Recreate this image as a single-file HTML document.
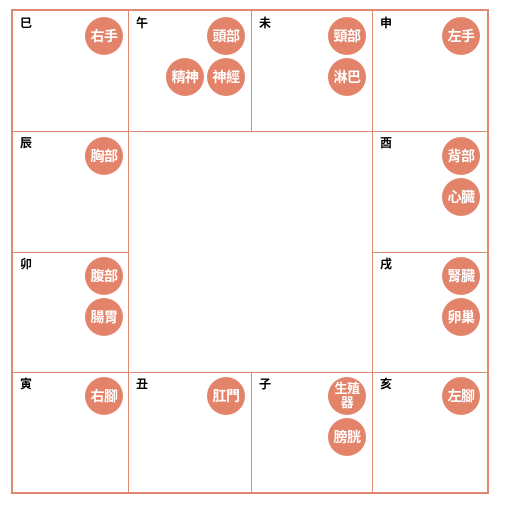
<!DOCTYPE html>
<html><head><meta charset="utf-8"><style>
body{margin:0;width:522px;height:505px;background:#fff;position:relative;font-family:"Liberation Sans","Noto Sans CJK TC",sans-serif;overflow:hidden}
.b{position:absolute;border:2px solid #de8a70;box-sizing:border-box}
.l{position:absolute;background:#de8a70}
.t{position:absolute;font-size:12px;color:#000;line-height:13px;font-weight:bold}
.c{position:absolute;width:38px;height:38px;border-radius:50%;background:#e2836a;color:#fff;font-weight:bold;font-size:14px;display:flex;align-items:center;justify-content:center;text-align:center;line-height:13px;letter-spacing:-0.5px}
</style></head><body>
<div class="b" style="left:11px;top:9px;width:478px;height:485px"></div>
<div class="l" style="left:12px;top:131px;width:476px;height:1px"></div>
<div class="l" style="left:12px;top:372px;width:476px;height:1px"></div>
<div class="l" style="left:12px;top:252px;width:117px;height:1px"></div>
<div class="l" style="left:372px;top:252px;width:116px;height:1px"></div>
<div class="l" style="left:128px;top:10px;width:1px;height:483px"></div>
<div class="l" style="left:372px;top:10px;width:1px;height:483px"></div>
<div class="l" style="left:251px;top:10px;width:1px;height:122px"></div>
<div class="l" style="left:251px;top:372px;width:1px;height:121px"></div>

<div class="t" style="left:20px;top:17px">巳</div>
<div class="t" style="left:136px;top:17px">午</div>
<div class="t" style="left:259px;top:17px">未</div>
<div class="t" style="left:380px;top:17px">申</div>
<div class="t" style="left:20px;top:137px">辰</div>
<div class="t" style="left:380px;top:137px">酉</div>
<div class="t" style="left:20px;top:258px">卯</div>
<div class="t" style="left:380px;top:258px">戌</div>
<div class="t" style="left:20px;top:378px">寅</div>
<div class="t" style="left:136px;top:378px">丑</div>
<div class="t" style="left:259px;top:378px">子</div>
<div class="t" style="left:380px;top:378px">亥</div>

<div class="c" style="left:85px;top:17px">右手</div>
<div class="c" style="left:207px;top:17px">頭部</div>
<div class="c" style="left:166px;top:58px">精神</div>
<div class="c" style="left:207px;top:58px">神經</div>
<div class="c" style="left:328px;top:17px">頸部</div>
<div class="c" style="left:328px;top:58px">淋巴</div>
<div class="c" style="left:442px;top:17px">左手</div>
<div class="c" style="left:85px;top:137px">胸部</div>
<div class="c" style="left:442px;top:137px">背部</div>
<div class="c" style="left:442px;top:178px">心臓</div>
<div class="c" style="left:85px;top:257px">腹部</div>
<div class="c" style="left:85px;top:298px">腸胃</div>
<div class="c" style="left:442px;top:257px">腎臓</div>
<div class="c" style="left:442px;top:298px">卵巢</div>
<div class="c" style="left:85px;top:377px">右腳</div>
<div class="c" style="left:207px;top:377px">肛門</div>
<div class="c" style="left:328px;top:377px;font-size:13px;line-height:14px">生殖<br>器</div>
<div class="c" style="left:328px;top:418px">膀胱</div>
<div class="c" style="left:442px;top:377px">左腳</div>
</body></html>
